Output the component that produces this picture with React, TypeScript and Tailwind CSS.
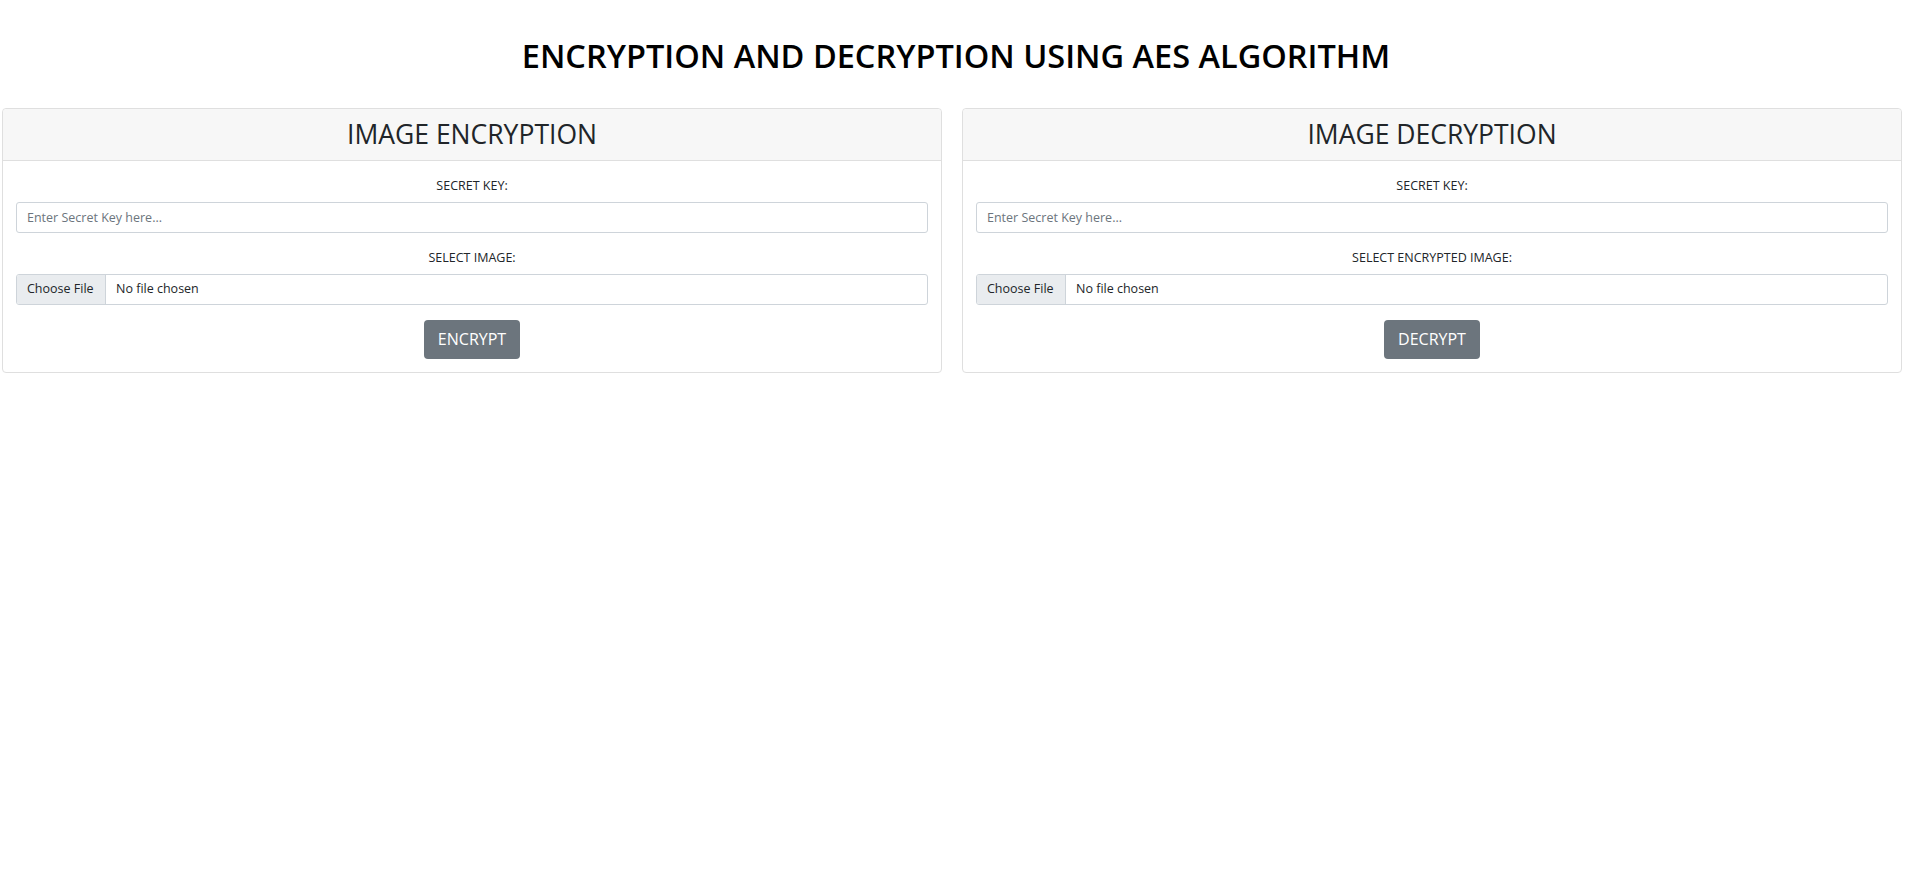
import { FunctionComponent } from "react";

type CardProps = {
  title: string;
  fileLabel: string;
  action: string;
};

const CryptoCard: FunctionComponent<CardProps> = ({ title, fileLabel, action }) => {
  return (
    <div className="border border-[#dfdfdf] rounded-[4px] bg-white">
      <div className="h-[52px] flex items-center justify-center bg-[#f7f7f7] border-b border-[#dfdfdf] rounded-t-[4px]">
        <h3 className="text-[26.5px] leading-[1.2] font-normal text-[#212529]">{title}</h3>
      </div>

      <div className="px-[13px] pt-[14.5px] pb-[13px] flex flex-col items-center">
        <label className="block text-[12.5px] leading-[19px] text-[#212529]">SECRET KEY:</label>
        <input
          type="text"
          placeholder="Enter Secret Key here..."
          className="mt-[7px] w-full h-[31px] px-[10px] text-[12.5px] text-[#495057] placeholder:text-[#6c757d] border border-[#ced4da] rounded-[3px] outline-none"
        />

        <label className="block mt-[15px] text-[12.5px] leading-[19px] text-[#212529]">{fileLabel}</label>
        <div className="mt-[7px] w-full h-[31px] flex items-stretch border border-[#ced4da] rounded-[3px] overflow-hidden text-[12.5px] text-[#212529]">
          <div className="w-[89px] flex items-center pl-[10px] bg-[#e9ecef] border-r border-[#ced4da]">Choose File</div>
          <div className="flex items-center pl-[10px]">No file chosen</div>
        </div>

        <button
          type="button"
          className="mt-[15px] h-[39px] w-[96px] rounded-[4px] bg-[#6c757d] text-white text-[16px] hover:bg-[#5a6268]"
        >
          {action}
        </button>
      </div>
    </div>
  );
};

const App: FunctionComponent = () => {
  return (
    <div className="min-h-screen bg-white" style={{ fontFamily: '"Open Sans", "Noto Sans", sans-serif' }}>
      <h2 className="pt-[36px] text-center text-[32.5px] leading-[40px] font-semibold text-black">
        ENCRYPTION AND DECRYPTION USING AES ALGORITHM
      </h2>

      <div className="mt-[32px] pl-[2px] pr-[10px] grid grid-cols-2 gap-[20px]">
        <CryptoCard title="IMAGE ENCRYPTION" fileLabel="SELECT IMAGE:" action="ENCRYPT" />
        <CryptoCard title="IMAGE DECRYPTION" fileLabel="SELECT ENCRYPTED IMAGE:" action="DECRYPT" />
      </div>
    </div>
  );
};

export default App;
